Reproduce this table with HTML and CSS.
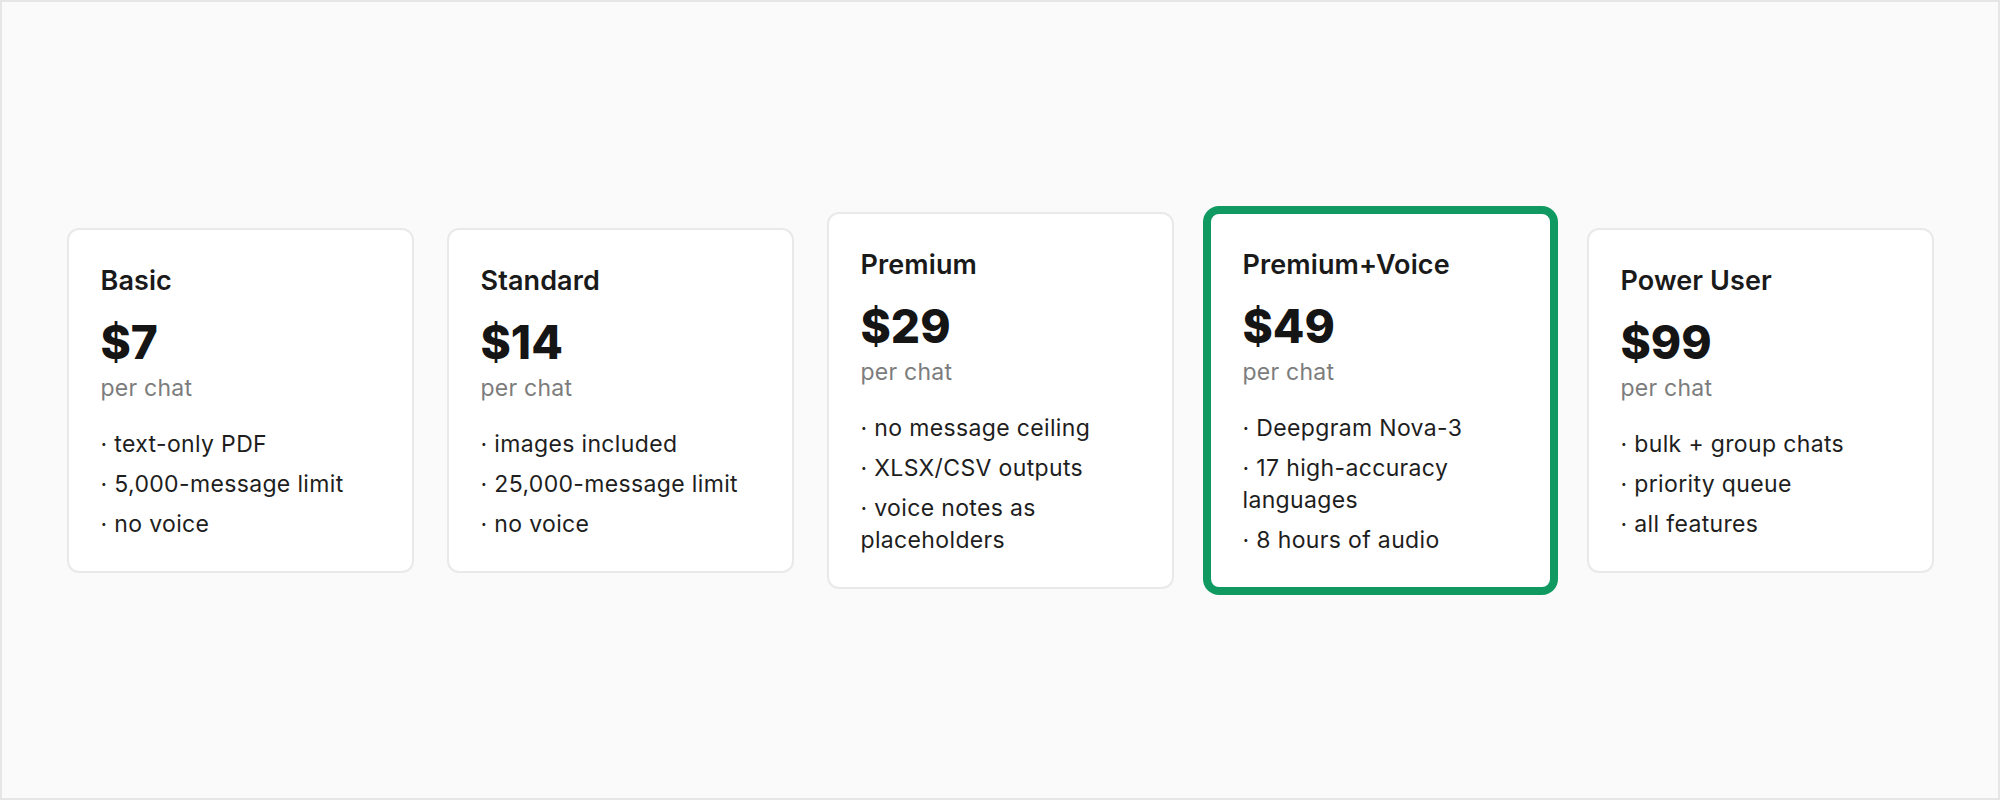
FILE: index.html
```html
<!DOCTYPE html>
<html lang="en">
<head>
    <meta charset="UTF-8">
    <meta name="viewport" content="width=device-width, initial-scale=1.0">
    <title>Pricing</title>
    <link rel="stylesheet" href="styles.css">
</head>
<body>
    <div class="pricing">
        <div class="pricing__row">
            <div class="plan">
                <h3 class="plan__name">Basic</h3>
                <div class="plan__price">$7</div>
                <div class="plan__unit">per chat</div>
                <ul class="plan__features">
                    <li>· text-only PDF</li>
                    <li>· 5,000-message limit</li>
                    <li>· no voice</li>
                </ul>
            </div>
            <div class="plan">
                <h3 class="plan__name">Standard</h3>
                <div class="plan__price">$14</div>
                <div class="plan__unit">per chat</div>
                <ul class="plan__features">
                    <li>· images included</li>
                    <li>· 25,000-message limit</li>
                    <li>· no voice</li>
                </ul>
            </div>
            <div class="plan">
                <h3 class="plan__name">Premium</h3>
                <div class="plan__price">$29</div>
                <div class="plan__unit">per chat</div>
                <ul class="plan__features">
                    <li>· no message ceiling</li>
                    <li>· XLSX/CSV outputs</li>
                    <li>· voice notes as placeholders</li>
                </ul>
            </div>
            <div class="plan plan--featured">
                <h3 class="plan__name">Premium+Voice</h3>
                <div class="plan__price">$49</div>
                <div class="plan__unit">per chat</div>
                <ul class="plan__features">
                    <li>· Deepgram Nova-3</li>
                    <li>· 17 high-accuracy languages</li>
                    <li>· 8 hours of audio</li>
                </ul>
            </div>
            <div class="plan">
                <h3 class="plan__name">Power User</h3>
                <div class="plan__price">$99</div>
                <div class="plan__unit">per chat</div>
                <ul class="plan__features">
                    <li>· bulk + group chats</li>
                    <li>· priority queue</li>
                    <li>· all features</li>
                </ul>
            </div>
        </div>
    </div>
</body>
</html>
```

FILE: styles.css
```css
* {
    box-sizing: border-box;
}
body {
    margin: 0;
    font-family: Inter, "Noto Sans", sans-serif;
    color: #1a1a1a;
}
.pricing {
    display: flex;
    align-items: center;
    justify-content: center;
    height: 800px;
    border: 2px solid #e6e6e6;
    background-color: #fafafa;
}
.pricing .pricing__row {
    display: flex;
    align-items: center;
    gap: 33px;
}
.pricing .plan {
    width: 347px;
    padding: 35px 32px 31px;
    border: 2px solid #e9e9e9;
    border-radius: 12px;
    background-color: #fff;
}
.pricing .plan--featured {
    border: 4px solid #109a62;
    box-shadow: 0 0 0 4px #109a62;
}
.pricing .plan .plan__name {
    margin: 0;
    font-size: 27px;
    font-weight: 600;
    line-height: 32px;
    letter-spacing: 0.1px;
}
.pricing .plan .plan__price {
    margin-top: 22px;
    font-size: 46px;
    font-weight: 800;
    line-height: 46px;
    color: #151515;
}
.pricing .plan .plan__unit {
    margin-top: 9px;
    font-size: 23px;
    line-height: 28px;
    letter-spacing: 0.25px;
    color: #7c7c7c;
}
.pricing .plan .plan__features {
    margin: 26px 0 0;
    padding: 0;
    list-style: none;
    font-size: 23px;
    line-height: 32px;
    letter-spacing: 0.35px;
    color: #1e1e1e;
}
.pricing .plan .plan__features li + li {
    margin-top: 8px;
}
```
